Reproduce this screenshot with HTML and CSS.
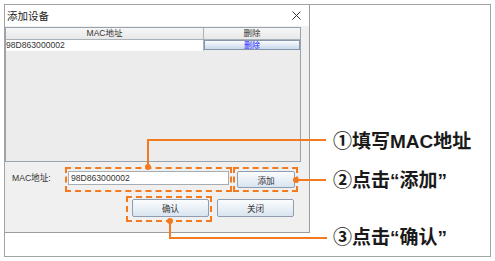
FILE: index.html
```html
<!DOCTYPE html>
<html lang="zh-CN">

<head>
    <meta charset="UTF-8">
    <meta name="viewport" content="width=device-width, initial-scale=1.0">
    <title>添加设备</title>
    <link rel="stylesheet" href="styles.css">
</head>

<body>

    <div class="frame">
        <div class="dialog">
            <div class="titlebar">
                <span class="title">添加设备</span>
                <svg class="close" width="9" height="9" viewBox="0 0 9 9">
                    <path d="M0.5 0.5 L8.5 8.5 M8.5 0.5 L0.5 8.5" stroke="#333" stroke-width="1" fill="none" />
                </svg>
            </div>
            <div class="dialog-body">
                <div class="table">
                    <div class="thead">
                        <div class="th col-mac">MAC地址</div>
                        <div class="th col-del">删除</div>
                    </div>
                    <div class="tr">
                        <div class="td col-mac">98D863000002</div>
                        <div class="td col-del"><button class="del-btn">删除</button></div>
                    </div>
                </div>

                <div class="form-row">
                    <span class="field-label">MAC地址:</span>
                    <div class="mark mark-input">
                        <div class="text-input">98D863000002</div>
                    </div>
                    <div class="mark mark-add">
                        <button class="btn btn-add">添加</button>
                    </div>
                </div>

                <div class="action-row">
                    <div class="mark mark-ok">
                        <button class="btn btn-ok">确认</button>
                    </div>
                    <button class="btn btn-close">关闭</button>
                </div>
            </div>
        </div>

        <div class="notes">
            <div class="note note-1">①填写MAC地址</div>
            <div class="note note-2">②点击“添加”</div>
            <div class="note note-3">③点击“确认”</div>
        </div>
    </div>

    <!-- callout lines drawn over the dialog -->
    <svg class="callouts" width="495" height="261" viewBox="0 0 495 261">
        <g stroke="#f47a20" stroke-width="2" fill="none">
            <path d="M148 167 V140 H326" />
            <path d="M296 180 H326" />
            <path d="M170 221 V238 H327" />
        </g>
        <g fill="#f47a20">
            <circle cx="148" cy="167" r="3" />
            <circle cx="296" cy="180" r="3" />
            <circle cx="170" cy="221" r="3" />
        </g>
    </svg>

</body>

</html>
```

FILE: styles.css
```css
body {
    margin: 0;
    position: relative;
    background-color: #ffffff;
    font-family: 'Liberation Sans', 'Noto Sans CJK SC', sans-serif;
}

.frame {
    margin: 4px 0 0 4px;
    width: 485px;
    height: 251px;
    border: 1px solid #a3a3a3;
    display: flex;
}

.dialog {
    box-sizing: border-box;
    width: 305px;
    height: 228px;
    border-right: 1px solid #9c9c9c;
    border-bottom: 1px solid #9c9c9c;
    background-color: #f0f0f0;
    display: flex;
    flex-direction: column;
}

.titlebar {
    height: 21px;
    background-color: #ffffff;
    display: flex;
    align-items: center;
    justify-content: space-between;
    padding: 0 8px 0 2px;
}

.title {
    font-size: 10.5px;
    color: #222;
    font-family: 'Noto Sans CJK SC', sans-serif;
}

.close {
    display: block;
}

.dialog-body {
    display: flex;
    flex-direction: column;
}

/* device table */
.table {
    box-sizing: border-box;
    margin-top: 1px;
    width: 296px;
    height: 135px;
    border: 1px solid #99a3ad;
    background-color: #ececec;
}

.thead {
    display: flex;
    height: 11px;
    border-bottom: 1px solid #a9b1b9;
    background: linear-gradient(#f6f6f6, #e8e8e8);
}

.tr {
    display: flex;
    height: 11px;
}

.col-mac {
    width: 197px;
    border-right: 1px solid #a9b1b9;
}

.col-del {
    flex: 1;
}

.th {
    font-size: 8.5px;
    line-height: 11px;
    text-align: center;
    color: #333;
}

.td {
    font-size: 8.6px;
    line-height: 11px;
    color: #333;
}

.td.col-mac {
    background-color: #ffffff;
}

.del-btn {
    display: block;
    box-sizing: border-box;
    width: 100%;
    height: 10px;
    margin: 0;
    padding: 0;
    border: 1px solid #8797aa;
    background: linear-gradient(#fbfcfe, #c9d8ec);
    color: #2323ff;
    font-family: 'Noto Sans CJK SC', sans-serif;
    font-size: 8px;
    line-height: 8px;
}

/* form */
.form-row {
    display: flex;
    align-items: flex-start;
    margin-top: 5px;
    padding-left: 7px;
}

.field-label {
    width: 53px;
    font-size: 8.6px;
    line-height: 23px;
    color: #333;
}

.mark {
    box-sizing: border-box;
    border: 2px dashed #f47a20;
}

.mark-input {
    width: 167px;
    height: 25px;
    padding: 2px 1px;
}

.text-input {
    box-sizing: border-box;
    height: 14px;
    border: 1px solid #a8adb3;
    background-color: #ffffff;
    padding-left: 2px;
    font-size: 8.6px;
    line-height: 12px;
    color: #333;
}

.mark-add {
    margin-left: 1px;
    width: 65px;
    height: 25px;
    padding: 2px 1px 2px 2px;
}

.btn {
    box-sizing: border-box;
    display: block;
    margin: 0;
    padding: 0;
    border: 1px solid #8e9db1;
    border-radius: 2px;
    background: linear-gradient(#fbfcfe, #d9e4f0);
    color: #333;
    font-family: 'Noto Sans CJK SC', sans-serif;
    font-size: 8.6px;
}

.btn-add {
    width: 58px;
    height: 17px;
}

.action-row {
    display: flex;
    align-items: flex-start;
    margin-top: 4px;
    padding-left: 121px;
}

.mark-ok {
    width: 86px;
    height: 26px;
    padding: 1px 0 3px 4px;
}

.btn-ok,
.btn-close {
    width: 77px;
    height: 18px;
}

.btn-close {
    margin: 3px 0 0 5px;
}

/* annotations */
.notes {
    flex: 1;
    display: flex;
    flex-direction: column;
    padding: 125px 0 0 23px;
}

.note {
    font-size: 19px;
    font-weight: 700;
    line-height: 24px;
    color: #1a1a1a;
    white-space: nowrap;
}

.note-2 {
    margin-top: 15px;
}

.note-3 {
    margin-top: 33px;
}

.callouts {
    position: absolute;
    top: 0;
    left: 0;
    pointer-events: none;
}
```
